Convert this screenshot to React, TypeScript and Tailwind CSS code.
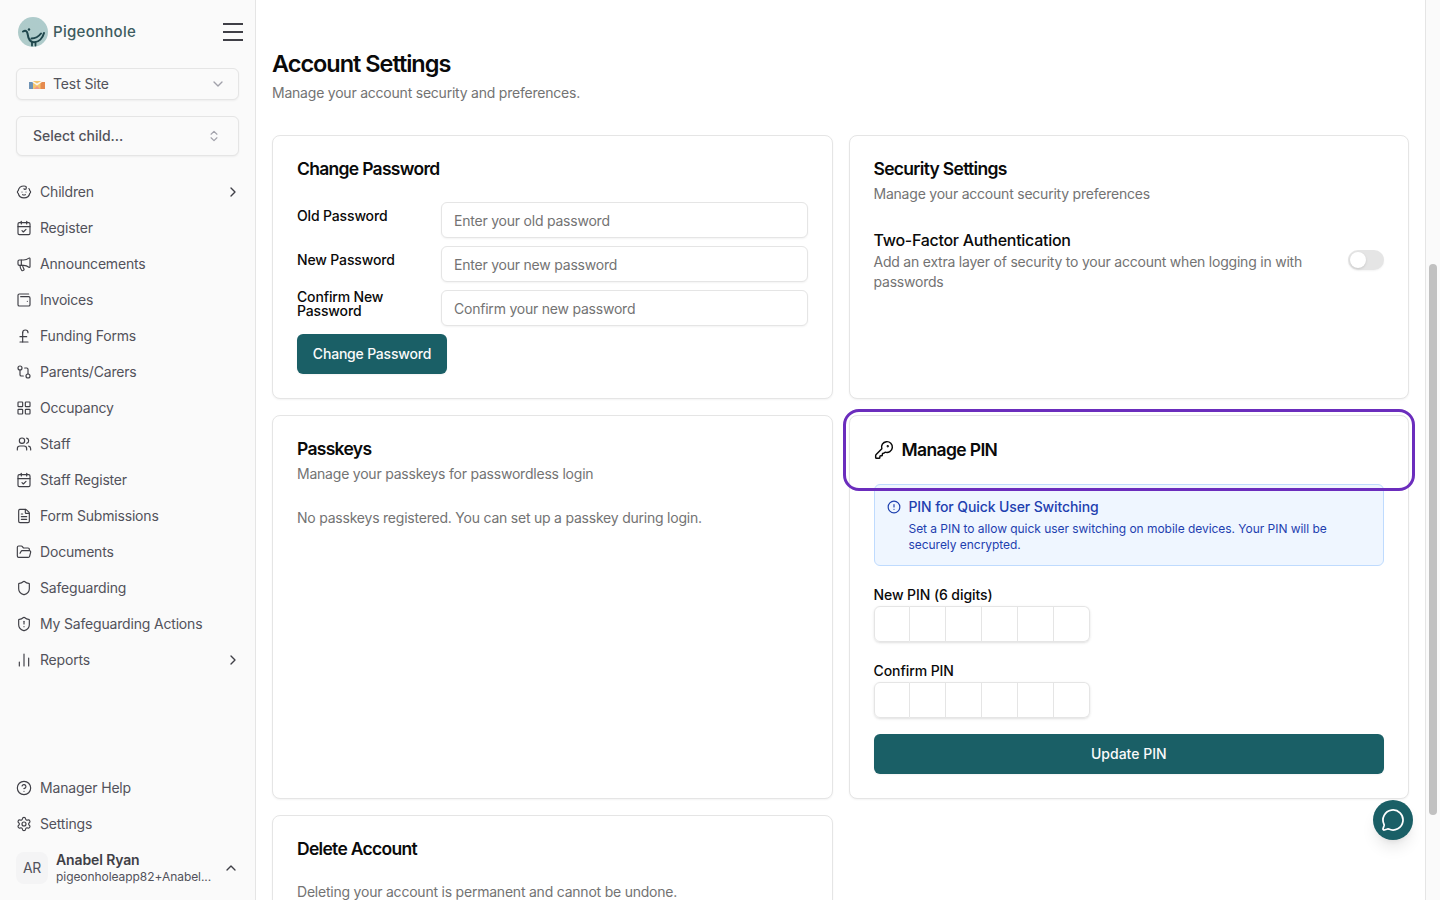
import {
  Baby,
  CalendarCheck,
  ChartNoAxesColumn,
  ChevronDown,
  ChevronRight,
  ChevronUp,
  ChevronsUpDown,
  CircleAlert,
  CircleHelp,
  FileText,
  FolderOpen,
  GitCompare,
  KeyRound,
  LayoutGrid,
  Megaphone,
  MessageCircle,
  PoundSterling,
  Settings,
  Shield,
  ShieldAlert,
  Users,
  WalletMinimal,
} from "lucide-react"

const navItems = [
  { label: "Children", icon: Baby, more: true },
  { label: "Register", icon: CalendarCheck },
  { label: "Announcements", icon: Megaphone },
  { label: "Invoices", icon: WalletMinimal },
  { label: "Funding Forms", icon: PoundSterling },
  { label: "Parents/Carers", icon: GitCompare },
  { label: "Occupancy", icon: LayoutGrid },
  { label: "Staff", icon: Users },
  { label: "Staff Register", icon: CalendarCheck },
  { label: "Form Submissions", icon: FileText },
  { label: "Documents", icon: FolderOpen },
  { label: "Safeguarding", icon: Shield },
  { label: "My Safeguarding Actions", icon: ShieldAlert },
  { label: "Reports", icon: ChartNoAxesColumn, more: true },
]

function Logo() {
  return (
    <svg width="30" height="30" viewBox="0 0 30 30" fill="none">
      <defs>
        <linearGradient id="logoBg" x1="3" y1="27" x2="27" y2="5">
          <stop offset="0" stopColor="#bdcba2" />
          <stop offset="0.5" stopColor="#aecbcb" />
          <stop offset="1" stopColor="#a4d1e8" />
        </linearGradient>
      </defs>
      <circle cx="15" cy="15" r="15" fill="url(#logoBg)" />
      <path d="M5 14.500c2.200-1.300 4-.8 4.500 2 .6 4.600 2.600 8.800 6.500 8.800 4.800 0 8.600-4 10-9.300" stroke="#1f464c" strokeWidth="2" strokeLinecap="round" />
      <path d="M13.500 21.500c3.500 0 7-1.800 9.500-5" stroke="#1f464c" strokeWidth="2" strokeLinecap="round" />
      <circle cx="11" cy="12.500" r="1.200" fill="#1f464c" />
      <path d="M14 25.500v3M17.500 25.500v3" stroke="#1f464c" strokeWidth="1.800" strokeLinecap="round" />
    </svg>
  )
}

function SiteLogo() {
  return (
    <svg width="16" height="9" viewBox="0 0 16 9">
      <rect x="0" y="2" width="4.500" height="7" fill="#6f93b5" />
      <rect x="4" y="1" width="8" height="8" fill="#f6c56d" />
      <rect x="11.500" y="2" width="4.500" height="7" fill="#e58a4e" />
      <path d="M3 0.500 8 3.500l5-3V2L8 5.500 3 2z" fill="#fbf7f1" />
      <path d="M5 9l3-3 3 3z" fill="#ef9a88" />
    </svg>
  )
}

function NavRow({ label, icon: Icon, more }: { label: string; icon: typeof Baby; more?: boolean }) {
  return (
    <div className="flex h-9 items-center gap-2 text-sm tracking-[-0.18px] text-[#52525b]">
      <Icon size={16} strokeWidth={1.75} className="shrink-0 text-[#3f3f46]" />
      <span className="flex-1">{label}</span>
      {more && <ChevronRight size={16} className="mr-[-2px] text-[#3f3f46]" />}
    </div>
  )
}

function Sidebar() {
  return (
    <aside className="flex h-full w-[256px] shrink-0 flex-col border-r border-[#e5e5e5] bg-[#fafafa] px-4">
      <div className="flex h-[64px] shrink-0 items-center justify-between pl-[2px]">
        <div className="flex items-center gap-[5px]">
          <Logo />
          <span className="text-[15px] font-medium tracking-[0.28px] text-[#3d5c60]">Pigeonhole</span>
        </div>
        <svg width="20" height="18" viewBox="0 0 20 18" className="mr-[-4px]">
          <path d="M0 1h20M0 9h20M0 17h20" stroke="#3f3f46" strokeWidth="2" />
        </svg>
      </div>
      <div className="mt-1 flex h-8 shrink-0 items-center rounded-md border border-[#e5e5e5] bg-[#fafafa] pl-3 pr-3 text-sm tracking-[-0.12px] text-[#52525b] shadow-xs">
        <SiteLogo />
        <span className="ml-2 flex-1">Test Site</span>
        <ChevronDown size={16} className="text-[#a1a1aa]" />
      </div>
      <div className="mt-4 flex h-10 shrink-0 items-center justify-between rounded-md border border-[#e5e5e5] bg-[#fafafa] pl-4 pr-[17px] text-sm font-[450] tracking-[-0.02px] text-[#52525b] shadow-xs">
        <span>Select child...</span>
        <ChevronsUpDown size={14} className="text-[#a1a1aa]" />
      </div>
      <nav className="mt-[18px] flex flex-col">
        {navItems.map((item) => (
          <NavRow key={item.label} label={item.label} icon={item.icon} more={item.more} />
        ))}
      </nav>
      <div className="mt-auto flex flex-col pb-4">
        <NavRow label="Manager Help" icon={CircleHelp} />
        <NavRow label="Settings" icon={Settings} />
        <div className="mt-[10px] flex h-8 items-center">
          <div className="flex h-8 w-8 items-center justify-center rounded-lg bg-[#f4f4f5] text-sm text-[#52525b]">AR</div>
          <div className="ml-2 flex-1">
            <div className="text-sm leading-[16px] font-semibold tracking-[-0.12px] text-[#3f3f46]">Anabel Ryan</div>
            <div className="text-xs leading-[17px] tracking-[-0.06px] text-[#52525b]">pigeonholeapp82+Anabel...</div>
          </div>
          <ChevronUp size={16} className="text-[#3f3f46]" />
        </div>
      </div>
    </aside>
  )
}

function Card({ className, children }: { className?: string; children: React.ReactNode }) {
  return <section className={`rounded-lg border border-[#e5e5e5] bg-white shadow-xs ${className ?? ""}`}>{children}</section>
}

function CardTitle({ children }: { children: React.ReactNode }) {
  return <h2 className="text-[17.5px] leading-[18px] font-semibold tracking-[-0.7px]">{children}</h2>
}

function PasswordRow({ label, placeholder }: { label: string; placeholder: string }) {
  return (
    <div className="flex items-center">
      <label className="w-[144px] shrink-0 pr-10 pb-2 text-sm leading-[14px] font-[450] tracking-[-0.15px] text-[#0a0a0a]">{label}</label>
      <div className="flex h-9 flex-1 items-center rounded-md border border-[#e5e5e5] bg-white px-3 pt-px text-sm text-[#737373] shadow-xs">
        {placeholder}
      </div>
    </div>
  )
}

function PinBoxes() {
  return (
    <div className="flex w-[216px] rounded-md shadow-sm">
      {[0, 1, 2, 3, 4, 5].map((i) => (
        <div
          key={i}
          className="h-9 w-9 border-y border-r border-[#e5e5e5] bg-white first:rounded-l-md first:border-l last:rounded-r-md"
        />
      ))}
    </div>
  )
}

export default function App() {
  return (
    <div className="flex h-screen w-full overflow-hidden bg-white font-[Inter,sans-serif] tracking-[-0.22px] text-[#0a0a0a]">
      <Sidebar />
      <main className="min-w-0 flex-1 overflow-hidden px-4 pt-12">
        <h1 className="text-[23.5px] leading-[32px] font-semibold tracking-[-1.02px]">Account Settings</h1>
        <p className="mt-[3px] text-sm text-[#737373]">Manage your account security and preferences.</p>

        <div className="mt-8 grid grid-cols-2 gap-4">
          <Card className="p-6">
            <CardTitle>Change Password</CardTitle>
            <div className="mt-6 flex flex-col gap-2">
              <PasswordRow label="Old Password" placeholder="Enter your old password" />
              <PasswordRow label="New Password" placeholder="Enter your new password" />
              <PasswordRow label="Confirm New Password" placeholder="Confirm your new password" />
            </div>
            <button className="mt-2 h-10 w-[150px] rounded-md bg-[#1a5f66] text-sm font-medium tracking-[-0.2px] text-[#fafafa] shadow-xs">
              Change Password
            </button>
          </Card>

          <Card className="p-6">
            <CardTitle>Security Settings</CardTitle>
            <p className="mt-[6px] text-sm text-[#737373]">Manage your account security preferences</p>
            <div className="mt-6 flex items-start justify-between">
              <div className="w-[456px]">
                <div className="font-[450] tracking-[-0.28px]">Two-Factor Authentication</div>
                <div className="text-sm text-[#737373]">
                  Add an extra layer of security to your account when logging in with passwords
                </div>
              </div>
              <div className="mt-[22px] flex h-5 w-9 items-center rounded-full bg-[#e5e5e5] p-[2px] shadow-xs">
                <div className="h-4 w-4 rounded-full bg-white shadow" />
              </div>
            </div>
          </Card>

          <Card className="p-6">
            <CardTitle>Passkeys</CardTitle>
            <p className="mt-[6px] text-sm text-[#737373]">Manage your passkeys for passwordless login</p>
            <p className="mt-6 text-sm text-[#737373]">No passkeys registered. You can set up a passkey during login.</p>
          </Card>

          <Card className="p-6">
            <h2 className="flex h-5 items-center gap-2 text-[17.5px] font-semibold tracking-[-0.63px]">
              <KeyRound size={20} strokeWidth={1.75} />
              Manage PIN
            </h2>
            <div className="mt-6 flex gap-2 rounded-md border border-[#bfdbfe] bg-[#eff6ff] p-3">
              <CircleAlert size={14} className="mt-[3px] shrink-0 text-[#1e40af]" />
              <div>
                <div className="text-sm font-medium tracking-[-0.11px] text-[#1e40af]">PIN for Quick User Switching</div>
                <div className="mt-1 text-xs tracking-[-0.04px] text-[#1e40af]">
                  Set a PIN to allow quick user switching on mobile devices. Your PIN will be securely encrypted.
                </div>
              </div>
            </div>
            <label className="mt-5 block pb-[2px] text-sm leading-[18px] font-[450] tracking-[-0.08px]">New PIN (6 digits)</label>
            <PinBoxes />
            <label className="mt-5 block pb-[2px] text-sm leading-[18px] font-[450] tracking-[-0.08px]">Confirm PIN</label>
            <PinBoxes />
            <button className="mt-4 h-10 w-full rounded-md bg-[#1a5f66] text-sm font-medium tracking-normal text-[#fafafa] shadow-xs">
              Update PIN
            </button>
          </Card>

          <Card className="h-[200px] p-6">
            <CardTitle>Delete Account</CardTitle>
            <p className="mt-6 text-sm text-[#737373]">Deleting your account is permanent and cannot be undone.</p>
          </Card>
        </div>
      </main>

      <div className="h-full w-[15px] shrink-0 border-l border-[#e5e5e5] bg-[#fafafa] pt-[264px] pl-[3px]">
        <div className="h-[551px] w-2 rounded-full bg-[#c1c1c1]" />
      </div>

      {/* tour highlight over the Manage PIN header */}
      <div className="pointer-events-none absolute top-[409px] left-[843px] h-[82px] w-[572px] rounded-2xl border-[3px] border-[#6b2dbd]" />

      <button className="absolute top-[800px] left-[1373px] flex h-10 w-10 items-center justify-center rounded-full bg-[#1a5f66] text-white shadow-lg">
        <MessageCircle size={24} strokeWidth={1.75} />
      </button>
    </div>
  )
}
